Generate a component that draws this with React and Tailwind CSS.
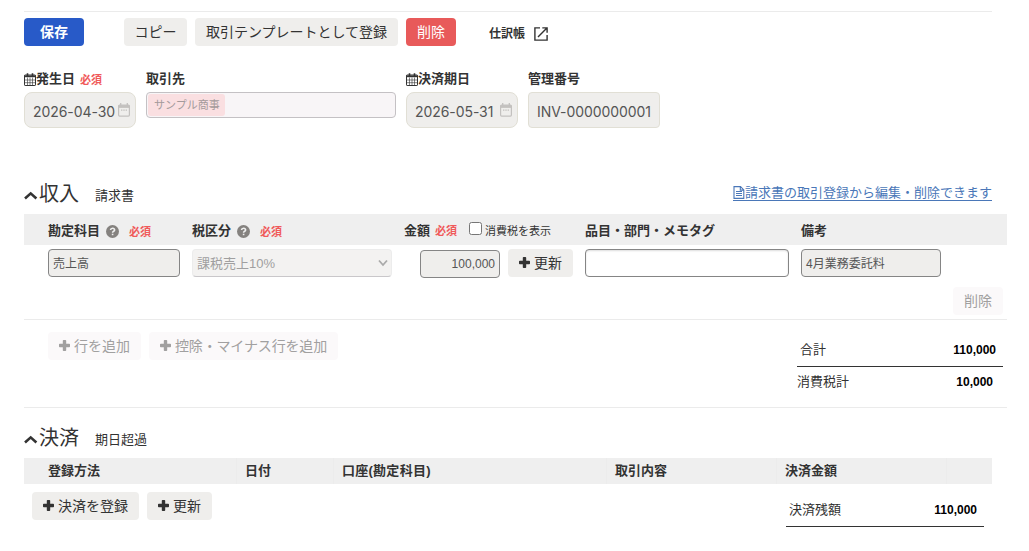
import React from 'react'

function Plus() {
  return (
    <svg className="w-[11px] h-[11px] shrink-0 mr-1 mb-px" viewBox="0 0 11 11" fill="currentColor">
      <path d="M4.6 0h1.8q.8 0 .8.8v3h3q.8 0 .8.8v1.8q0 .8-.8.8h-3v3q0 .8-.8.8H4.6q-.8 0-.8-.8v-3h-3Q0 7.200 0 6.400V4.600q0-.8.8-.8h3v-3q0-.8.8-.8z" />
    </svg>
  )
}

function OpenInNew() {
  return (
    <svg className="w-[14px] h-[14px] shrink-0 ml-[9px]" viewBox="0 0 14 14" fill="none" stroke="#333" strokeWidth="1.400">
      <path d="M6 0.900H0.900v12.200h12.200V8" />
      <path d="M8.300 0.900h4.800v4.800M12.900 1.100L4 10" />
    </svg>
  )
}

function GridCalendar() {
  return (
    <svg className="w-3 h-[13px] shrink-0" viewBox="0 0 12 13" fill="none" stroke="#333" strokeWidth="1">
      <rect x="0.500" y="2" width="11" height="10.500" rx="0.600" />
      <path d="M0 3.300h12" strokeWidth="1.800" />
      <path d="M3.500 4.500v8M6 4.500v8M8.500 4.500v8M0.500 7h11M0.500 9.700h11" strokeWidth="0.600" />
      <path d="M3.500 0.200v3M8.500 0.200v3" strokeWidth="1.600" />
    </svg>
  )
}

function PickerIcon() {
  return (
    <svg className="w-3 h-[14px] shrink-0" viewBox="0 0 12 14" fill="none" stroke="#c3c1bf">
      <rect x="0.600" y="2.100" width="10.800" height="11" rx="1" strokeWidth="1.200" />
      <path d="M0.600 3.500h10.800" strokeWidth="2.800" />
      <path d="M2.700 0v3M9.300 0v3" strokeWidth="1.300" />
      <path d="M3 7.200h1.400M5.300 7.200h1.400M7.600 7.200h1.400" strokeWidth="1.300" />
    </svg>
  )
}

function Help() {
  return (
    <svg className="w-[13px] h-[13px] shrink-0 ml-1.5" viewBox="0 0 13 13">
      <circle cx="6.500" cy="6.500" r="6.500" fill="#85827f" />
      <path d="M4.500 5Q4.700 3.200 6.600 3.200T8.600 5Q8.600 5.800 7.600 6.300T6.600 7.800" fill="none" stroke="#efefef" strokeWidth="1.600" />
      <path d="M5.800 8.700h1.600v1.500H5.800z" fill="#efefef" />
    </svg>
  )
}

function Chevron() {
  return (
    <svg className="w-[14px] h-[10px] shrink-0 mt-[3px] mr-px" viewBox="0 0 14 10" fill="none" stroke="#333" strokeWidth="2.600">
      <path d="M1 8.500L6.700 3.400l5.700 5.100" />
    </svg>
  )
}

function FileIcon() {
  return (
    <svg className="w-3 h-[13px] shrink-0" viewBox="0 0 12 13" fill="none" stroke="currentColor" strokeWidth="1.100">
      <path d="M1 0.600h6.500l3.300 3.300v8.500H1zM7.300 0.600v3.500h3.500" />
      <path d="M3 5.500h6M3 7.500h6M3 9.500h6" />
    </svg>
  )
}

function Required({ className = '' }) {
  return <span className={'text-[11px] font-bold text-[#f05a5a] ' + className}>必須</span>
}

function Button({ className = '', children }) {
  return (
    <button type="button" className={'flex items-center justify-center h-7 shrink-0 pb-px rounded text-[14px] leading-none whitespace-nowrap ' + className}>
      {children}
    </button>
  )
}

function DateField({ label, value, required }) {
  return (
    <div className="w-28 mr-2.5">
      <div className="flex items-center h-[26px] text-[13px] font-bold whitespace-nowrap">
        <GridCalendar />
        {label}
        {required && <Required className="ml-[5px] mt-0.5" />}
      </div>
      <div className="flex items-center justify-between h-9 pl-2 pr-[5px] rounded-lg border border-[#e1dfd5] bg-[#efeeec] text-[#555]">
        <span className="pt-0.5 font-[Inter] text-[14px] tracking-[-0.005em] whitespace-nowrap">{value}</span>
        <PickerIcon />
      </div>
    </div>
  )
}

function SectionTitle({ title, note }) {
  return (
    <h2 className="flex items-center h-[30px] text-[20px] leading-[30px]">
      <Chevron />
      <span className="pt-px">{title}</span>
      <small className="ml-4 mt-[5px] text-[13px]">{note}</small>
    </h2>
  )
}

function App() {
  return (
    <div className="w-[1029px] h-[551px] overflow-hidden bg-white pl-6 pt-[11px] text-[#333] font-['Liberation_Sans','Noto_Sans_CJK_JP',sans-serif]">
      <div className="w-[968px] border-t border-[#ebebeb] pt-1.5 flex">
        <Button className="w-[60px] mr-10 bg-[#285ac8] text-white font-bold">保存</Button>
        <Button className="w-[63px] mr-2 bg-[#efeeec]">コピー</Button>
        <Button className="w-[203px] mr-2 bg-[#efeeec]">取引テンプレートとして登録</Button>
        <Button className="w-[50px] bg-[#e85a5a] text-white">削除</Button>
        <a href="#" className="flex items-center ml-[33px] mt-1 h-6 text-[12px] font-bold">
          仕訳帳
          <OpenInNew />
        </a>
      </div>

      <div className="flex mt-5">
        <DateField label="発生日" value="2026-04-30" required />
        <div className="w-[250px] mr-2.5">
          <div className="flex items-center h-[26px] text-[13px] font-bold">取引先</div>
          <div className="flex items-center h-[26px] px-px rounded border border-[#c4c1c4] bg-[#f8f5f7]">
            <span className="flex items-center w-[77px] h-[22px] pl-1.5 rounded-[3px] bg-[#fadfe1] text-[11px] text-[#a39a9b]">サンプル商事</span>
          </div>
        </div>
        <DateField label="決済期日" value="2026-05-31" />
        <div className="w-[132px]">
          <div className="flex items-center h-[26px] text-[13px] font-bold">管理番号</div>
          <div className="flex items-center h-9 pl-2 pt-0.5 rounded border border-[#e1dfd5] bg-[#efeeec] font-[Inter] text-[14px] tracking-[-0.005em] text-[#555] whitespace-nowrap">INV-0000000001</div>
        </div>
      </div>

      <div className="flex justify-between w-[968px] mt-[50px]">
        <SectionTitle title="収入" note="請求書" />
        <a href="#" className="flex items-center self-start h-[30px] text-[13px] text-[#4a77b8]">
          <span className="flex items-center h-[15px] border-b border-[#4a77b8]"><FileIcon />請求書の取引登録から編集・削除できます</span>
        </a>
      </div>

      <div className="flex items-center w-[983px] h-[31px] mt-1.5 pl-6 pt-[3px] bg-[#efefef] text-[13px] font-bold whitespace-nowrap">
        <div className="flex items-center w-36">勘定科目<Help /><Required className="ml-2.5 mt-0.5" /></div>
        <div className="flex items-center w-[212px]">税区分<Help /><Required className="ml-2.5 mt-0.5" /></div>
        <div className="flex items-center w-[181px] -mt-px">
          金額<Required className="ml-[5px] mt-px" />
          <span className="w-[13px] h-[13px] ml-3 mb-[5px] rounded-[2.5px] border border-[#767676] bg-white"></span>
          <span className="ml-[3px] mt-px text-[11px] font-normal">消費税を表示</span>
        </div>
        <div className="w-[216px]">品目・部門・メモタグ</div>
        <div>備考</div>
      </div>

      <div className="w-[983px] h-[75px] pt-1 border-b border-[#ebebeb]">
        <div className="flex pl-6 text-[12px] text-[#555]">
          <div className="flex items-center w-[132px] h-7 mr-3 pl-1 pt-px rounded border border-[#858585] bg-[#efeeec]">売上高</div>
          <div className="flex items-center justify-between w-[200px] h-7 mr-7 pl-1 pr-[3px] pt-px rounded border border-[#ececec] border-b-[#c9c7ca] bg-[#f3f2f1] text-[13px] text-[#a09fa0]">
            課税売上10%
            <svg className="w-[10px] h-[8px] mb-px" viewBox="0 0 10 8" fill="none" stroke="#aaa" strokeWidth="1.800"><path d="M1 1.500L5 6l4-4.500" /></svg>
          </div>
          <div className="flex items-center justify-end w-20 h-7 mt-px mr-2 pr-1 rounded border border-[#858585] bg-[#efeeec] text-[12px]">100,000</div>
          <Button className="w-[65px] mr-3 bg-[#efeeec] text-[#333]"><Plus />更新</Button>
          <div className="w-[204px] h-7 mr-3 rounded border border-[#858585] bg-white shadow-[inset_0_1px_2px_#ddd]"></div>
          <div className="flex items-center w-[140px] h-7 pl-1 pt-px rounded border border-[#858585] bg-[#efeeec]">4月業務委託料</div>
        </div>
        <div className="flex justify-end pr-1 mt-[9px]">
          <Button className="w-[50px] bg-[#fbf9fa] text-[#a1a0a0]">削除</Button>
        </div>
      </div>

      <div className="flex w-[983px] h-[88px] pl-6 pt-3 border-b border-[#ebebeb]">
        <Button className="w-[93px] mr-2 bg-[#fbf9fa] text-[#a1a0a0]"><Plus />行を追加</Button>
        <Button className="w-[189px] bg-[#fbf9fa] text-[#a1a0a0] tracking-[-0.01em]"><Plus />控除・マイナス行を追加</Button>
        <div className="w-[206px] ml-auto mr-1 text-[13px]">
          <div className="flex items-center justify-between h-[35px] pl-[3px] pr-[7px] pt-0.5 border-b border-[#333]">
            合計<b className="text-[12px] text-black">110,000</b>
          </div>
          <div className="flex items-center justify-between h-[29px] pr-[10px] pt-px">
            消費税計<b className="text-[12px] text-black">10,000</b>
          </div>
        </div>
      </div>

      <div className="mt-3.5">
        <SectionTitle title="決済" note="期日超過" />
      </div>

      <div className="flex w-[968px] h-[26px] mt-1.5 bg-[#efefef] text-[13px] leading-[26px] font-bold">
        <div className="w-[213px] pl-6 border-r border-[#ececec]">登録方法</div>
        <div className="w-[97px] pl-2 border-r border-[#ececec]">日付</div>
        <div className="w-[273px] pl-2 border-r border-[#ececec] tracking-[0.02em]">口座(勘定科目)</div>
        <div className="w-[170px] pl-2 border-r border-[#ececec]">取引内容</div>
        <div className="w-[170px] pl-2 border-r border-[#ececec]">決済金額</div>
      </div>

      <div className="flex w-[968px] pl-2 pt-2">
        <Button className="w-[107px] mr-2 bg-[#efeeec]"><Plus />決済を登録</Button>
        <Button className="w-[65px] bg-[#efeeec]"><Plus />更新</Button>
        <div className="flex items-center justify-between w-[198px] h-[35px] ml-auto mr-2 pl-[3px] pr-[7px] pt-0.5 border-b border-[#333] text-[13px]">
          決済残額<b className="text-[12px] text-black">110,000</b>
        </div>
      </div>
    </div>
  )
}

export default App
